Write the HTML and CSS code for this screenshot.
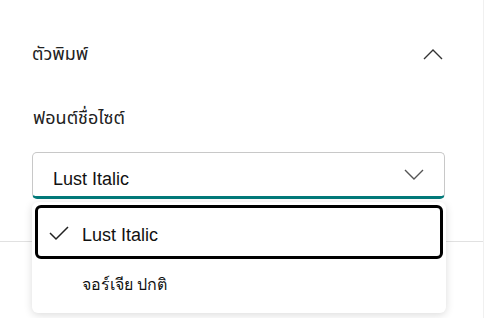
FILE: index.html
```html
<!DOCTYPE html>
<html lang="th">
<head>
    <meta charset="UTF-8">
    <meta name="viewport" content="width=device-width, initial-scale=1.0">
    <title>ตัวพิมพ์</title>
    <link rel="stylesheet" href="styles.css">
</head>
<body>
    <div class="pane">
        <!-- Sezione ตัวพิมพ์ -->
        <div class="section">
            <div class="section-header">
                <span class="section-title">ตัวพิมพ์</span>
                <svg class="chevron" width="20" height="12" viewBox="0 0 20 12">
                    <polyline points="1,11 10,2 19,11" fill="none" stroke="#333" stroke-width="1.4"/>
                </svg>
            </div>
            <div class="field-label">ฟอนต์ชื่อไซต์</div>
            <div class="select">
                <span class="select-value">Lust Italic</span>
                <svg class="chevron" width="20" height="12" viewBox="0 0 20 12">
                    <polyline points="1,1 10,10 19,1" fill="none" stroke="#555" stroke-width="1.4"/>
                </svg>
            </div>
        </div>
        <div class="divider"></div>

        <!-- Menu a tendina -->
        <div class="dropdown">
            <div class="option selected">
                <svg class="check" width="20" height="16" viewBox="0 0 20 16">
                    <polyline points="1,8 7,14 19,2" fill="none" stroke="#222" stroke-width="1.5"/>
                </svg>
                <span class="latin">Lust Italic</span>
            </div>
            <div class="option">
                <span>จอร์เจีย ปกติ</span>
            </div>
        </div>
    </div>
</body>
</html>
```

FILE: styles.css
```css
/* Stile generale */
body {
    margin: 0;
    background: #ffffff;
    font-family: "Segoe UI", "Noto Sans", "Noto Sans Thai", Tahoma, "DejaVu Sans", sans-serif;
    color: #222;
    overflow: hidden;
}

.pane {
    position: relative;
    width: 483px;
    height: 318px;
    border-right: 1px solid #f0f0f0;
}

.section {
    padding: 36px 38px 0 32px;
}

.section-header {
    display: flex;
    justify-content: space-between;
    align-items: center;
    height: 36px;
}

.section-title {
    font-size: 18px;
}

.section-header .chevron {
    margin-right: 2px;
}

.field-label {
    margin-top: 32px;
    font-size: 18px;
    line-height: 26px;
    padding-left: 1px;
}

.select {
    margin-top: 22px;
    height: 43px;
    border: 1px solid #c8c8c8;
    border-bottom: 3px solid #037a7a;
    border-radius: 5px;
    display: flex;
    align-items: center;
    justify-content: space-between;
    padding: 0 20px 0 20px;
}

.select-value {
    font-family: "Segoe UI", "Liberation Sans", Arial, sans-serif;
    font-size: 18px;
    padding-top: 10px;
    color: #111;
}

.divider {
    margin-top: 42px;
    border-top: 1px solid #e1e1e1;
}

/* Menu a tendina */
.dropdown {
    position: absolute;
    top: 202px;
    left: 32px;
    width: 408px;
    padding: 3px;
    background: #ffffff;
    border-radius: 6px;
    box-shadow: 0 2px 8px rgba(0, 0, 0, 0.14);
}

.option {
    display: flex;
    align-items: center;
    height: 45px;
    padding-left: 44px;
    font-size: 16px;
    border: 3px solid transparent;
    border-radius: 6px;
    position: relative;
}

.option span {
    font-family: "Segoe UI", "Liberation Sans", "Noto Sans", Tahoma, sans-serif;
    color: #111;
}

.option .latin {
    font-size: 18px;
    padding-top: 6px;
}

.option.selected {
    border-color: #000000;
    height: 48px;
}

.check {
    position: absolute;
    left: 11px;
    top: 17px;
}
```
